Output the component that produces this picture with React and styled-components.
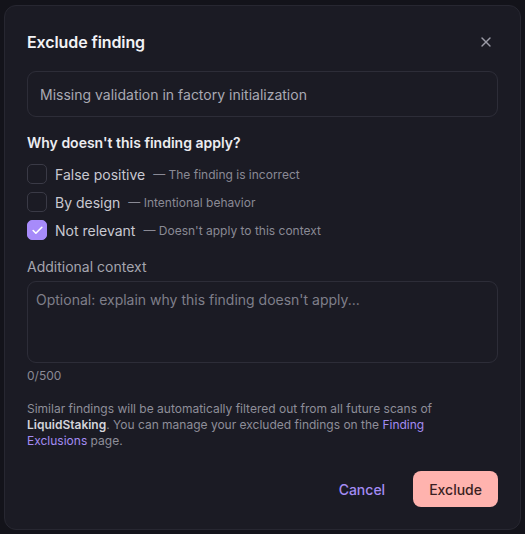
import React from "react";
import styled, { createGlobalStyle } from "styled-components";

const Global = createGlobalStyle`
  html, body { margin: 0; padding: 0; background: #13131a; }
  body { font-family: Inter, "Noto Sans", sans-serif; -webkit-font-smoothing: antialiased; }
  * { box-sizing: border-box; }
`;

const Page = styled.div`
  width: 525px;
  height: 534px;
  padding: 5px 4px 4px 4px;
  background: #13131a;
`;

const Modal = styled.div`
  width: 517px;
  height: 525px;
  background: #1b1b24;
  border: 1px solid #272731;
  border-radius: 12px;
  padding: 23px 22px 22px 22px;
  display: flex;
  flex-direction: column;
`;

const Header = styled.div`
  display: flex;
  align-items: center;
  justify-content: space-between;
  height: 26px;
`;

const Title = styled.h2`
  margin: 0;
  font-size: 16px;
  font-weight: 600;
  color: #f2f2f5;
  letter-spacing: -0.1px;
`;

const Close = styled.button`
  background: none;
  border: 0;
  padding: 0;
  width: 20px;
  height: 20px;
  display: flex;
  align-items: center;
  justify-content: center;
  color: #9b9ba6;
  margin-right: 2px;
`;

const FindingBox = styled.div`
  margin-top: 16px;
  height: 46px;
  border: 1px solid #2d2d38;
  border-radius: 9px;
  padding: 0 12px;
  display: flex;
  align-items: center;
  font-size: 14px;
  color: #a9a9b3;
`;

const SectionLabel = styled.div`
  margin-top: 16px;
  font-size: 14px;
  font-weight: 600;
  color: #ececf0;
  line-height: 20px;
`;

const Options = styled.div`
  margin-top: 11px;
  display: flex;
  flex-direction: column;
  gap: 8px;
`;

const Option = styled.label`
  display: flex;
  align-items: center;
  height: 20px;
`;

const Box = styled.span`
  width: 20px;
  height: 20px;
  border-radius: 5px;
  border: 1px solid ${p => (p.$checked ? "#a78bfa" : "#3a3a46")};
  background: ${p => (p.$checked ? "#a78bfa" : "transparent")};
  display: flex;
  align-items: center;
  justify-content: center;
  flex-shrink: 0;
`;

const OptName = styled.span`
  margin-left: 8px;
  font-size: 14px;
  color: #c9c9d1;
`;

const OptDesc = styled.span`
  margin-left: 8px;
  font-size: 12px;
  color: #8a8a95;
`;

const FieldLabel = styled.div`
  margin-top: 18px;
  font-size: 14px;
  color: #a5a5af;
  line-height: 18px;
`;

const TextArea = styled.textarea`
  display: block;
  margin-top: 5px;
  height: 82px;
  min-height: 82px;
  width: 100%;
  resize: none;
  background: transparent;
  border: 1px solid #2d2d38;
  border-radius: 9px;
  padding: 8px 8px;
  font-family: Inter, sans-serif;
  font-size: 14px;
  line-height: 20px;
  color: #c9c9d1;
  &::placeholder { color: #7f7f8a; }
  outline: none;
`;

const Counter = styled.div`
  margin-top: 4px;
  font-size: 12px;
  color: #8a8a95;
  line-height: 18px;
`;

const Note = styled.p`
  margin: 16px 0 0 0;
  font-size: 12px;
  line-height: 16px;
  color: #8e8e99;
  width: 420px;
`;

const Strong = styled.strong`
  font-weight: 600;
  color: #d4d4da;
`;

const Link = styled.a`
  color: #a48cf3;
  text-decoration: none;
`;

const Footer = styled.div`
  margin-top: auto;
  display: flex;
  justify-content: flex-end;
  align-items: center;
  gap: 10px;
`;

const Button = styled.button`
  font-family: Inter, sans-serif;
  font-size: 14px;
  font-weight: 500;
  height: 36px;
  border: 0;
  border-radius: 8px;
  padding: 0 ${p => (p.$primary ? "16px" : "18px")};
  background: ${p => (p.$primary ? "#ffb3ae" : "transparent")};
  color: ${p => (p.$primary ? "#3b1f22" : "#a48cf3")};
`;

const options = [
  { name: "False positive", desc: "— The finding is incorrect", checked: false },
  { name: "By design", desc: "— Intentional behavior", checked: false },
  { name: "Not relevant", desc: "— Doesn't apply to this context", checked: true },
];

export default function App() {
  return (
    <>
      <Global />
      <Page>
        <Modal>
          <Header>
            <Title>Exclude finding</Title>
            <Close aria-label="Close">
              <svg width="16" height="16" viewBox="0 0 24 24" fill="none" stroke="currentColor" strokeWidth="2" strokeLinecap="round">
                <path d="M18 6 6 18" />
                <path d="m6 6 12 12" />
              </svg>
            </Close>
          </Header>
          <FindingBox>Missing validation in factory initialization</FindingBox>
          <SectionLabel>Why doesn't this finding apply?</SectionLabel>
          <Options>
            {options.map(o => (
              <Option key={o.name}>
                <Box $checked={o.checked}>
                  {o.checked && (
                    <svg width="13" height="13" viewBox="0 0 24 24" fill="none" stroke="#fff" strokeWidth="3" strokeLinecap="round" strokeLinejoin="round">
                      <path d="M20 6 9 17l-5-5" />
                    </svg>
                  )}
                </Box>
                <OptName>{o.name}</OptName>
                <OptDesc>{o.desc}</OptDesc>
              </Option>
            ))}
          </Options>
          <FieldLabel>Additional context</FieldLabel>
          <TextArea placeholder="Optional: explain why this finding doesn't apply..." />
          <Counter>0/500</Counter>
          <Note>
            Similar findings will be automatically filtered out from all future scans of{" "}
            <Strong>LiquidStaking</Strong>. You can manage your excluded findings on the{" "}
            <Link href="#">Finding Exclusions</Link> page.
          </Note>
          <Footer>
            <Button>Cancel</Button>
            <Button $primary>Exclude</Button>
          </Footer>
        </Modal>
      </Page>
    </>
  );
}
